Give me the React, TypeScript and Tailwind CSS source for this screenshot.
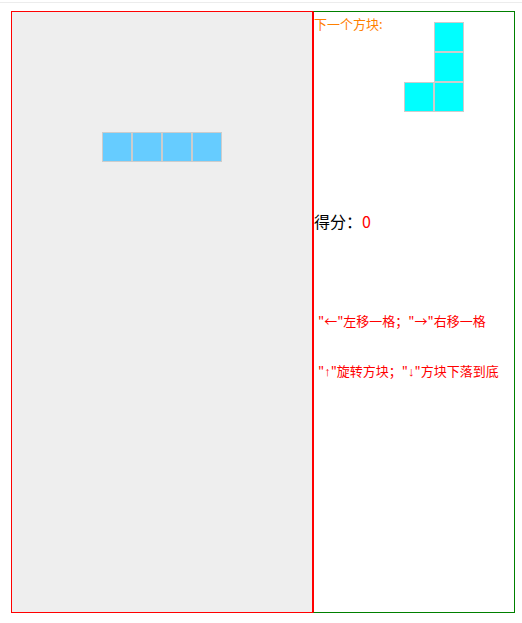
const font = "font-['Noto_Sans_CJK_SC','Liberation_Sans',sans-serif]";

const Cell = ({ color }: { color: string }) => (
  <div className={`w-[30px] h-[30px] border border-[#cccccc] ${color}`} />
);

const Empty = () => <div className="w-[30px] h-[30px]" />;

const Arrow = ({ ch }: { ch: string }) => (
  <span className="font-['Liberation_Sans',sans-serif]">{ch}</span>
);

export default function App() {
  return (
    <div className={`min-h-screen bg-white ${font}`}>
      <div className="h-[2px]" />
      <div className="h-px bg-[#ececec]" />
      <div className="flex pl-[11px] pt-[8px]">
        {/* game board */}
        <div className="w-[302px] h-[602px] border border-[#ff0000] bg-[#eeeeee] pt-[120px] pl-[90px]">
          <div className="flex">
            <Cell color="bg-[#66ccff]" />
            <Cell color="bg-[#66ccff]" />
            <Cell color="bg-[#66ccff]" />
            <Cell color="bg-[#66ccff]" />
          </div>
        </div>

        {/* side panel */}
        <div className="w-[202px] h-[602px] border border-[#008000] border-l-[#ff0000]">
          <div className="flex">
            <span className="w-[90px] text-[13px] leading-[20px] pt-[2px] text-[#ff8000]">
              下一个方块:
            </span>
            <div className="mt-[10px] grid grid-cols-[30px_30px]">
              <Empty />
              <Cell color="bg-[#00ffff]" />
              <Empty />
              <Cell color="bg-[#00ffff]" />
              <Cell color="bg-[#00ffff]" />
              <Cell color="bg-[#00ffff]" />
            </div>
          </div>
          <div className="mt-[97px] text-[16px] leading-[24px] text-black">
            得分：<span className="text-[#ff0000]">0</span>
          </div>
          <p className="mt-[78px] pl-[4px] text-[13px] leading-[20px] text-[#ff0000]">
            "←"左移一格；"→"右移一格
          </p>
          <p className="mt-[30px] pl-[4px] text-[13px] leading-[20px] text-[#ff0000]">
            "<Arrow ch="↑" />"旋转方块；"<Arrow ch="↓" />"方块下落到底
          </p>
        </div>
      </div>
    </div>
  );
}
